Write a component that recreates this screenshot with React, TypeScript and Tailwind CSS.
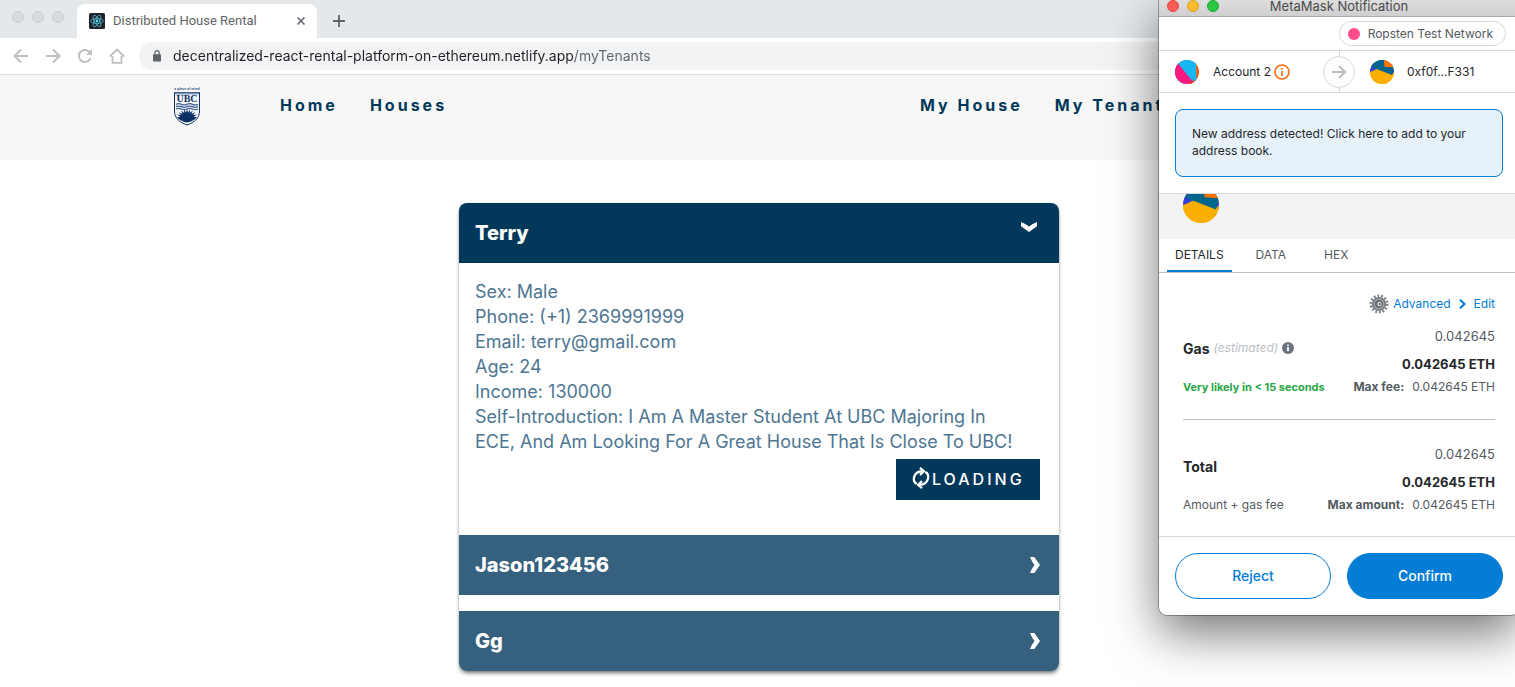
import { useState } from "react";
import type { ReactNode } from "react";

const tenants = [
  {
    name: "Terry",
    details: [
      "Sex: Male",
      "Phone: (+1) 2369991999",
      "Email: terry@gmail.com",
      "Age: 24",
      "Income: 130000",
      "Self-Introduction: I Am A Master Student At UBC Majoring In ECE, And Am Looking For A Great House That Is Close To UBC!",
    ],
  },
  { name: "Jason123456", details: [] },
  { name: "Gg", details: [] },
];

function ReactLogo() {
  return (
    <svg width="16" height="16" viewBox="0 0 16 16" aria-hidden="true">
      <rect width="16" height="16" rx="1.5" fill="#20232a" />
      <g fill="none" stroke="#4fb8d0" strokeWidth="0.8">
        <ellipse cx="8" cy="8" rx="6.4" ry="2.5" />
        <ellipse cx="8" cy="8" rx="6.4" ry="2.5" transform="rotate(60 8 8)" />
        <ellipse cx="8" cy="8" rx="6.4" ry="2.5" transform="rotate(120 8 8)" />
      </g>
      <circle cx="8" cy="8" r="1.4" fill="#61dafb" />
    </svg>
  );
}

function NavIcon({ children }: { children: ReactNode }) {
  return (
    <svg width="16" height="16" viewBox="0 0 16 16" fill="none" stroke="#bdbfc1" strokeWidth="2" aria-hidden="true">
      {children}
    </svg>
  );
}

function Crest() {
  return (
    <svg className="tracking-normal" width="26" height="39" viewBox="0 0 26 39" aria-hidden="true">
      <text x="13" y="3.4" textAnchor="middle" fontSize="3.5" fontWeight="700" fill="#2f4f82" fontFamily="Liberation Sans, sans-serif">
        a place of mind
      </text>
      <path d="M0.5 5.5h25v18.5c0 7-5 11.500-12.500 14C5.500 35.500.5 31 .5 24z" fill="#f7f7f7" stroke="#0c2f66" strokeWidth="1" />
      <path d="M1 5.500h24v2H1z" fill="#7f97b8" />
      <text x="13" y="15" textAnchor="middle" fontSize="10" fontWeight="700" fill="#0c2f66" fontFamily="Liberation Serif, serif">
        UBC
      </text>
      <g fill="none" stroke="#3a5c91" strokeWidth="1.300">
        <path d="M2 17.300q2.750-1.200 5.500 0t5.500 0 5.500 0 5.500 0" />
        <path d="M2 19.700q2.750-1.200 5.500 0t5.500 0 5.500 0 5.500 0" />
        <path d="M2 22q2.750-1.200 5.500 0t5.500 0 5.500 0 5.500 0" />
      </g>
      <path
        d="M13 22l1 3.500 2-3-.2 3.600 3-2.600-1.300 3.400 3.900-1.900-2.400 3.100 4.100-.7-3.400 2.400 3.200.4C21 32.500 17.500 34.700 13 35.500 8.500 34.700 5 32.500 3.100 30.200l3.200-.4-3.400-2.400 4.100.7-2.400-3.100 3.900 1.900-1.300-3.400 3 2.600-.2-3.600 2 3z"
        fill="#0c2f66"
      />
    </svg>
  );
}

function BlueAvatar({ className }: { className: string }) {
  return (
    <svg className={className} viewBox="0 0 24 24" aria-hidden="true">
      <clipPath id="pink-avatar">
        <circle cx="12" cy="12" r="12" />
      </clipPath>
      <g clipPath="url(#pink-avatar)">
        <rect width="24" height="24" fill="#fb5a06" />
        <path d="M0 0h21l.5 20L15 24H0z" fill="#18b7f2" />
        <path d="M3 3.500L19 23l-3 3H0V4z" fill="#fb1880" />
        <path d="M19 19l3 1-6 5h-4z" fill="#f3330e" />
        <path d="M4 0h16.500l.5 19.500-2.500 2L3 3z" fill="#18b7f2" />
      </g>
    </svg>
  );
}

function GoldAvatar({ className, id }: { className: string; id: string }) {
  return (
    <svg className={className} viewBox="0 0 24 24" aria-hidden="true">
      <clipPath id={id}>
        <circle cx="12" cy="12" r="12" />
      </clipPath>
      <g clipPath={`url(#${id})`}>
        <rect width="24" height="24" fill="#faae00" />
        <path d="M0 0h24v15l-12-7-12 4z" fill="#2b3ee0" />
        <path d="M0 12.500L6.500 9 22 15v9H0z" fill="#faae00" />
        <path d="M21 15l4-4v8z" fill="#faae00" />
        <path d="M3 0h12l9 6.500-2 8.500L1.500 7z" fill="#01668e" />
        <path d="M14 0h10v7.500l-9.700-.7z" fill="#fa7500" />
      </g>
    </svg>
  );
}

function Gear() {
  return (
    <svg width="20" height="20" viewBox="0 0 20 20" aria-hidden="true">
      <circle cx="10" cy="10" r="8.200" fill="none" stroke="#80858c" strokeWidth="2.600" strokeDasharray="1.900 1.780" />
      <circle cx="10" cy="10" r="6.200" fill="#a9adb2" stroke="#777c83" strokeWidth="1.800" />
      <circle cx="10" cy="10" r="4.200" fill="#6a6e75" />
      <circle cx="10.500" cy="10" r="2.600" fill="#eceef0" stroke="#55595f" strokeWidth="0.800" />
      <circle cx="10.700" cy="10" r="0.900" fill="#2f3236" />
    </svg>
  );
}

function BrowserChrome() {
  return (
    <header className="font-[Inter,sans-serif]">
      <div className="flex h-[38px] items-end bg-[#e4e8eb]">
        <div className="flex gap-2 self-start pt-[11px] pl-3">
          <span className="size-3 rounded-full border border-[#cbcdcf] bg-[#dadbdc]" />
          <span className="size-3 rounded-full border border-[#cbcdcf] bg-[#dadbdc]" />
          <span className="size-3 rounded-full border border-[#cbcdcf] bg-[#dadbdc]" />
        </div>
        <div className="ml-[13px] flex h-[34px] w-60 items-center rounded-t-lg bg-white pr-2.5 pl-3">
          <ReactLogo />
          <span className="ml-2 flex-1 font-[Roboto,sans-serif] text-[13px] text-[#5f6368]">Distributed House Rental</span>
          <button type="button" aria-label="Close tab" className="p-0.5">
            <svg width="8" height="8" viewBox="0 0 8 8" stroke="#5f6368" strokeWidth="1.500" aria-hidden="true">
              <path d="M.5.5l7 7M7.500.5l-7 7" />
            </svg>
          </button>
        </div>
        <button type="button" aria-label="New tab" className="mb-[11px] ml-4">
          <svg width="12" height="12" viewBox="0 0 12 12" stroke="#5f6368" strokeWidth="1.800" aria-hidden="true">
            <path d="M6 0v12M0 6h12" />
          </svg>
        </button>
      </div>
      <div className="flex h-[37px] items-center border-b border-[#dadce0] bg-white pl-[13px]">
        <div className="flex gap-4">
          <button type="button" aria-label="Back">
            <NavIcon>
              <path d="M15 8H2M8 1.500L1.500 8 8 14.500" />
            </NavIcon>
          </button>
          <button type="button" aria-label="Forward">
            <NavIcon>
              <path d="M1 8h13M8 1.500L14.500 8 8 14.500" />
            </NavIcon>
          </button>
          <button type="button" aria-label="Reload">
            <NavIcon>
              <path d="M13.500 10.200A6 6 0 1 1 12.600 4.200" />
              <path d="M15 1v6H9z" fill="#bdbfc1" stroke="none" />
            </NavIcon>
          </button>
          <button type="button" aria-label="Home page">
            <NavIcon>
              <path d="M3.500 8v6.800h9V8M.8 8.500L8 1.500l7.200 7" strokeWidth="1.800" />
            </NavIcon>
          </button>
        </div>
        <div className="ml-3.5 flex h-7 flex-1 items-center rounded-l-full bg-[#f1f3f4] pl-3.5">
          <svg width="8" height="12" viewBox="0 0 8 12" aria-hidden="true">
            <rect y="4.200" width="8" height="7.300" rx="0.800" fill="#5f6368" />
            <path d="M1.900 5V2.800a2.100 2.100 0 0 1 4.200 0V5" fill="none" stroke="#5f6368" strokeWidth="1.200" />
          </svg>
          <input
            aria-label="Address"
            defaultValue="decentralized-react-rental-platform-on-ethereum.netlify.app/myTenants"
            className="ml-3 min-w-0 flex-1 bg-[linear-gradient(90deg,#202124_402px,#5f6368_402px)] bg-clip-text pb-px text-[14px] text-[#202124] outline-none [-webkit-text-fill-color:transparent]"
          />
        </div>
      </div>
    </header>
  );
}

function SiteNav() {
  return (
    <nav className="flex h-[85px] items-start bg-[#f7f7f7] pt-3 pl-[174px] font-[Inter,sans-serif] text-[16px] leading-9 font-bold tracking-[3px] whitespace-nowrap text-[#02385a]">
      <a href="#top" aria-label="Start page">
        <Crest />
      </a>
      <div className="ml-20 flex gap-8">
        <a href="#home">Home</a>
        <a href="#houses">Houses</a>
      </div>
      <div className="mr-[340px] ml-auto flex w-[255px] gap-8">
        <a href="#my-house">My House</a>
        <a href="#my-tenants">My Tenants</a>
      </div>
    </nav>
  );
}

function TenantList() {
  const [open, setOpen] = useState(0);
  return (
    <main className="pt-[43px] pb-4 pl-[3px] font-[Inter,sans-serif]">
      <div className="mx-auto flex max-w-[600px] flex-col overflow-hidden rounded-lg bg-white shadow-[0_3px_4px_-1px_rgba(0,0,0,0.55),0_0_2px_rgba(0,0,0,0.15)]">
        {tenants.map((tenant, i) => (
          <section key={tenant.name} className={i > 1 ? "mt-4" : ""}>
            <h2>
              <button
                type="button"
                aria-expanded={open === i}
                onClick={() => setOpen(open === i ? -1 : i)}
                className={
                  open === i
                    ? "flex h-[60px] w-full items-center justify-between bg-[#02385a] pr-[22px] pl-4 text-[20px] font-extrabold text-white"
                    : "flex h-[60px] w-full items-center justify-between bg-[#35607e] pr-[19px] pl-4 text-[20px] font-extrabold text-white"
                }
              >
                {tenant.name}
                {open === i ? (
                  <svg className="mb-3" width="16" height="10" viewBox="0 0 16 10" aria-hidden="true">
                    <path d="M0 0q5 2 8 4.500Q11 2 16 0v4.300L8 10 0 4.300z" fill="#fff" />
                  </svg>
                ) : (
                  <svg width="10" height="16" viewBox="0 0 10 16" aria-hidden="true">
                    <path d="M0 0h4.300L10 8l-5.700 8H0q2-5 4.500-8Q2 5 0 0z" fill="#fff" />
                  </svg>
                )}
              </button>
            </h2>
            {open === i && tenant.details.length > 0 && (
              <div className="pt-4 pr-[19px] pb-[35px] pl-4">
                <div className="pr-4 text-[18px] leading-[25px] text-[#4d7693]">
                  {tenant.details.map((line) => (
                    <p key={line}>{line}</p>
                  ))}
                </div>
                <button
                  type="button"
                  className="mt-[5px] ml-auto flex h-[41px] w-36 items-center bg-[#02385a] pb-0.5 pl-4 text-[16px] font-medium tracking-[3px] text-white"
                >
                  <svg className="mb-0.5 mr-0.5" width="18" height="22" viewBox="0 0 18 22" fill="none" stroke="#fff" strokeWidth="2.200" aria-hidden="true">
                    <path d="M4.600 17C.2 14.500.5 4.800 10.500 4.200M8 .8l4 3.400-4 3.800" />
                    <path d="M13.400 5C17.800 7.500 17.500 17.200 7.500 17.800M10 21.200l-4-3.400L10 14" />
                  </svg>
                  LOADING
                </button>
              </div>
            )}
          </section>
        ))}
      </div>
    </main>
  );
}

function FeeBlock({ title, note, caption }: { title: ReactNode; note: ReactNode; caption: string }) {
  return (
    <div className="grid grid-cols-[auto_1fr] items-center text-[#535a61]">
      <div className="row-span-2 pb-1 text-[14px] text-[#24272a]">{title}</div>
      <div className="text-right text-[13px] leading-7">0.042645</div>
      <div className="text-right text-[13px] leading-7 font-bold text-[#24272a]">0.042645 ETH</div>
      <div className="text-[12px] leading-[18px]">{note}</div>
      <div className="flex justify-end gap-2 text-[12px] leading-[18px]">
        <b>{caption}</b>
        <span>0.042645 ETH</span>
      </div>
    </div>
  );
}

function WalletWindow() {
  return (
    <aside
      aria-label="MetaMask Notification"
      className="absolute top-0 -right-1 w-[360px] rounded-b-lg bg-white font-[Inter,sans-serif] text-[12px] text-[#24272a] shadow-[0_0_0_1px_rgba(0,0,0,0.3),0_18px_50px_rgba(0,0,0,0.55)]"
    >
      <div className="flex h-[17px] items-center border-b border-[#a9a9a9] bg-linear-to-b from-[#dedede] to-[#cfcfcf] pb-1 pl-2">
        <div className="flex gap-2">
          <button type="button" aria-label="Close window" className="size-3 rounded-full border border-[#e0443e] bg-[#fc5b57]" />
          <button type="button" aria-label="Minimise window" className="size-3 rounded-full border border-[#dfa023] bg-[#fdbc2e]" />
          <button type="button" aria-label="Zoom window" className="size-3 rounded-full border border-[#1fa62f] bg-[#28c840]" />
        </div>
        <h1 className="flex-1 pr-[60px] text-center text-[13px] leading-3 text-[#4a4a4a]">MetaMask Notification</h1>
      </div>

      <div className="flex h-[34px] items-center justify-end border-b border-[#d6d9dc] pr-[13px]">
        <button type="button" className="flex h-[25px] items-center gap-2 rounded-full border border-[#d6d9dc] pr-3 pl-2 text-[12px] text-[#535a61]">
          <span className="size-3 rounded-full bg-[#ff4a8d]" />
          Ropsten Test Network
        </button>
      </div>

      <div className="grid h-[42px] grid-cols-[1fr_32px_1fr] items-center border-b border-[#d6d9dc]">
        <div className="flex items-center pl-4">
          <BlueAvatar className="size-6" />
          <span className="ml-3.5">Account 2</span>
          <svg className="ml-[3px]" width="16" height="16" viewBox="0 0 16 16" aria-hidden="true">
            <circle cx="8" cy="8" r="7" fill="none" stroke="#f66a0a" strokeWidth="1.600" />
            <path d="M8 7v5M8 4v1.700" stroke="#f66a0a" strokeWidth="1.600" />
          </svg>
        </div>
        <div className="flex h-[41px] flex-col items-center">
          <span className="w-px flex-1 bg-[#d6d9dc]" />
          <span className="flex size-8 items-center justify-center rounded-full border border-[#d6d9dc]">
            <svg width="14" height="14" viewBox="0 0 14 14" fill="none" stroke="#bbc0c5" strokeWidth="2.200" aria-hidden="true">
              <path d="M0 7h12.500M7 1l6 6-6 6" />
            </svg>
          </span>
          <span className="w-px flex-1 bg-[#d6d9dc]" />
        </div>
        <div className="flex items-center gap-[13px] pl-[15px]">
          <GoldAvatar className="size-6" id="recipient-small" />
          <span>0xf0f...F331</span>
        </div>
      </div>

      <div className="border-b border-[#d6d9dc] p-4">
        <button type="button" className="h-[68px] w-full rounded-lg border border-[#037dd6] bg-[#e6f1fa] px-4 pb-0.5 text-left leading-[17px]">
          New address detected! Click here to add to your address book.
        </button>
      </div>

      <div className="flex h-[45px] items-start overflow-hidden bg-[#f2f3f4] pl-6">
        <GoldAvatar className="-mt-[7px] size-9" id="recipient-large" />
      </div>

      <div role="tablist" className="flex h-[34px] border-b border-[#bbc0c5] pl-2 text-[12px] text-[#535a61]">
        <button type="button" role="tab" aria-selected="true" className="border-b-2 border-[#037dd6] px-2 text-[#24272a]">
          DETAILS
        </button>
        <button type="button" role="tab" aria-selected="false" className="ml-4 border-b-2 border-transparent px-2">
          DATA
        </button>
        <button type="button" role="tab" aria-selected="false" className="ml-[22px] border-b-2 border-transparent px-2">
          HEX
        </button>
      </div>

      <div className="px-6 pt-[19px] pb-[22px]">
        <div className="flex h-[30px] items-center justify-end pb-1.5 text-[#037dd6]">
          <a href="#advanced" className="flex items-center gap-1">
            <Gear />
            Advanced
            <svg className="ml-1" width="7" height="10" viewBox="0 0 7 10" fill="none" stroke="#037dd6" strokeWidth="2" aria-hidden="true">
              <path d="M1 .8L5.500 5 1 9.200" />
            </svg>
          </a>
          <a href="#edit" className="ml-2">Edit</a>
        </div>
        <FeeBlock
          title={
            <span className="flex items-center gap-1">
              <b>Gas</b>
              <i className="text-[12px] text-[#bbc0c5]">(estimated)</i>
              <svg width="12" height="12" viewBox="0 0 12 12" aria-label="Gas info" role="img">
                <circle cx="6" cy="6" r="6" fill="#6a737d" />
                <path d="M6 5v4.200M6 2.500v1.600" stroke="#fff" strokeWidth="1.700" />
              </svg>
            </span>
          }
          note={<b className="text-[11px] text-[#28a745]">Very likely in &lt; 15 seconds</b>}
          caption="Max fee:"
        />
        <hr className="mt-[23px] mb-5 border-[#bbc0c5]" />
        <FeeBlock title={<b>Total</b>} note="Amount + gas fee" caption="Max amount:" />
      </div>

      <div className="flex gap-4 border-t border-[#d6d9dc] p-4 text-[14px] font-medium">
        <button type="button" className="h-[46px] flex-1 rounded-full border border-[#037dd6] pb-0.5 text-[#037dd6]">
          Reject
        </button>
        <button type="button" className="h-[46px] flex-1 rounded-full border border-[#037dd6] bg-[#037dd6] pb-0.5 text-white">
          Confirm
        </button>
      </div>
    </aside>
  );
}

export default function App() {
  return (
    <div className="relative min-h-screen overflow-hidden bg-white">
      <BrowserChrome />
      <SiteNav />
      <TenantList />
      <WalletWindow />
    </div>
  );
}
